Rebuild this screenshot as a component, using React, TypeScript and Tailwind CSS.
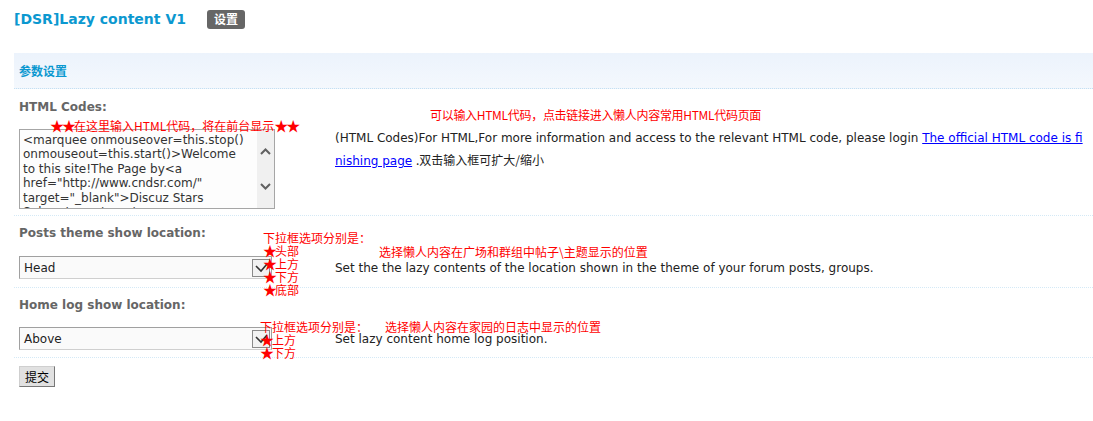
import React from "react";

const cjk = "font-['Noto_Sans_CJK_SC',sans-serif]";

function FakeTextarea({ lines }: { lines: string[] }) {
  return (
    <div className="flex w-[256px] h-[80px] border border-[#a6a6a6] bg-[#fdfdfd] overflow-hidden">
      <div className="flex-1 overflow-hidden pl-[3px] pt-[3px] pr-[2px] leading-[14.4px] text-[#333] whitespace-nowrap">
        {lines.map((l, i) => (
          <div key={i}>{l}</div>
        ))}
      </div>
      <div className="w-[17px] bg-[#f0f0f0] flex flex-col items-center justify-between py-[18px]">
        <svg width="11" height="7" viewBox="0 0 11 7">
          <polyline points="1,6 5.5,1.5 10,6" fill="none" stroke="#616161" strokeWidth="2" />
        </svg>
        <svg width="11" height="7" viewBox="0 0 11 7">
          <polyline points="1,1 5.5,5.5 10,1" fill="none" stroke="#616161" strokeWidth="2" />
        </svg>
      </div>
    </div>
  );
}

function FakeSelect({ value }: { value: string }) {
  return (
    <div className="flex items-center w-[253px] h-[23px] border border-[#a0a0a0] border-b-[#cfcfcf] bg-[#fafafa] pl-[4px] pr-[1px]">
      <span className="flex-1 text-[#222] text-[12px]">{value}</span>
      <span className="w-[18px] h-[18px] border border-[#8a8a8a] bg-[#f2f2f2] flex items-center justify-center">
        <svg width="16" height="16" viewBox="0 0 16 16">
          <polyline points="3,6 8,11 14,4" fill="none" stroke="#333" strokeWidth="1.6" />
        </svg>
      </span>
    </div>
  );
}

function Note({ className, children }: { className: string; children: React.ReactNode }) {
  return (
    <div className={`absolute text-[12px] leading-[12px] text-[#ff0000] whitespace-nowrap ${cjk} ${className}`}>
      {children}
    </div>
  );
}

function Star() {
  return <span className="inline-block w-[12px] text-[14px] leading-[12px] text-center">★</span>;
}

export default function App() {
  const code = [
    "<marquee onmouseover=this.stop()",
    "onmouseout=this.start()>Welcome",
    "to this site!The Page by<a",
    'href="http://www.cndsr.com/"',
    'target="_blank">Discuz Stars',
    "Subsystem</a></marquee>",
  ];

  return (
    <div className="relative w-[1093px] h-[421px] bg-white pl-[14px] text-[12px] text-[#333] font-['DejaVu_Sans','Liberation_Sans',sans-serif]">
      {/* title */}
      <div className="flex items-center h-[38px]">
        <span className="text-[14px] font-bold text-[#0b98d0]">[DSR]Lazy content V1</span>
        <span className={`ml-[21px] h-[19px] w-[38px] rounded-[3px] bg-[#666] text-white font-bold flex items-center justify-center ${cjk}`}>
          设置
        </span>
      </div>

      {/* section header */}
      <div className="mt-[15px] h-[36px] flex items-center pl-[5px] border-b border-dotted border-[#c4e0f2] bg-gradient-to-b from-[#ecf3fc] to-[#f4f8fd]">
        <span className={`font-bold text-[#0b98d0] ${cjk}`}>参数设置</span>
      </div>

      {/* HTML codes */}
      <div className="border-b border-dotted border-[#d4e9f6] pb-[6px]">
        <div className="pt-[11px] pl-[5px] leading-[14px] font-bold text-[#666]">HTML Codes:</div>
        <div className="flex mt-[15px]">
          <div className="w-[321px] pl-[5px] shrink-0">
            <FakeTextarea lines={code} />
          </div>
          <div className="flex-1 pr-[5px] leading-[21px] text-[#222] -mt-[1px]">
            (HTML Codes)For HTML,For more information and access to the relevant HTML code, please login{" "}
            <a href="#" className="text-[#0000ff] underline break-all">
              The official HTML code is finishing page
            </a>{" "}
            <span className={cjk}>.双击输入框可扩大/缩小</span>
          </div>
        </div>
      </div>

      {/* posts theme */}
      <div className="border-b border-dotted border-[#d4e9f6] pb-[8px]">
        <div className="pt-[10px] pl-[5px] leading-[14px] font-bold text-[#666]">Posts theme show location:</div>
        <div className="flex items-center mt-[16px]">
          <div className="w-[321px] pl-[5px] shrink-0">
            <FakeSelect value="Head" />
          </div>
          <div className="flex-1 text-[#222]">
            Set the the lazy contents of the location shown in the theme of your forum posts, groups.
          </div>
        </div>
      </div>

      {/* home log */}
      <div className="border-b border-dotted border-[#d4e9f6] pb-[7px]">
        <div className="pt-[10px] pl-[5px] leading-[14px] font-bold text-[#666]">Home log show location:</div>
        <div className="flex items-center mt-[15px]">
          <div className="w-[321px] pl-[5px] shrink-0">
            <FakeSelect value="Above" />
          </div>
          <div className="flex-1 text-[#222]">Set lazy content home log position.</div>
        </div>
      </div>

      <div className="pl-[5px] mt-[8px]">
        <button
          className={`h-[21px] w-[36px] bg-[#e1e1e1] border border-t-[#cfcfcf] border-l-[#cfcfcf] border-r-[#777] border-b-[#777] text-black text-[12px] ${cjk}`}
        >
          提交
        </button>
      </div>

      {/* red annotations */}
      <Note className="left-[50px] top-[119px]">
        <Star />
        <Star />
        在这里输入HTML代码，将在前台显示
        <Star />
        <Star />
      </Note>
      <Note className="left-[430px] top-[109px] tracking-[-0.3px]">可以输入HTML代码，点击链接进入懒人内容常用HTML代码页面</Note>
      <Note className="left-[263px] top-[232px]">
        <div>下拉框选项分别是：</div>
        <div><Star />头部</div>
        <div><Star />上方</div>
        <div><Star />下方</div>
        <div><Star />底部</div>
      </Note>
      <Note className="left-[379px] top-[246px]">选择懒人内容在广场和群组中帖子\主题显示的位置</Note>
      <Note className="left-[260px] top-[321px]">
        <div>下拉框选项分别是：</div>
        <div><Star />上方</div>
        <div><Star />下方</div>
      </Note>
      <Note className="left-[385px] top-[321px]">选择懒人内容在家园的日志中显示的位置</Note>
    </div>
  );
}
